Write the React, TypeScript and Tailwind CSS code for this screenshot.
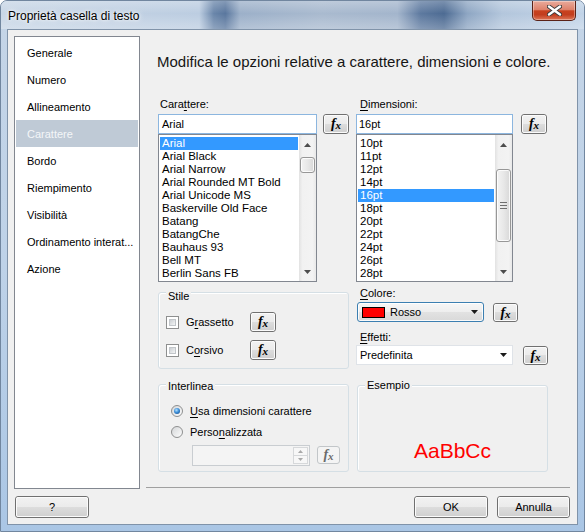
import React from "react";

const navItems = [
  "Generale",
  "Numero",
  "Allineamento",
  "Carattere",
  "Bordo",
  "Riempimento",
  "Visibilità",
  "Ordinamento interat...",
  "Azione",
];

const fontItems = [
  "Arial",
  "Arial Black",
  "Arial Narrow",
  "Arial Rounded MT Bold",
  "Arial Unicode MS",
  "Baskerville Old Face",
  "Batang",
  "BatangChe",
  "Bauhaus 93",
  "Bell MT",
  "Berlin Sans FB",
];

const sizeItems = ["10pt", "11pt", "12pt", "14pt", "16pt", "18pt", "20pt", "22pt", "24pt", "26pt", "28pt"];

function FxButton({ className = "", disabled = false }: { className?: string; disabled?: boolean }) {
  return (
    <div
      className={`${className} shrink-0 rounded-[3px] border ${
        disabled
          ? "border-[#c2c6c9] bg-[#f4f4f4]"
          : "border-[#707070] bg-[linear-gradient(to_bottom,#f2f2f2_0%,#ebebeb_50%,#dddddd_50%,#cfcfcf_100%)]"
      }`}
    >
      <div
        className={`w-full h-full rounded-[2px] border ${
          disabled ? "border-transparent" : "border-[#fbfbfb]"
        } flex items-center justify-center`}
      >
        <span
          className={`font-['Liberation_Serif',serif] italic font-bold text-[14px] leading-none ${
            disabled ? "text-[#6b6b6b]" : "text-black"
          }`}
        >
          f<span className="text-[11px] align-[-1px]">x</span>
        </span>
      </div>
    </div>
  );
}

function Button({ className = "", children }: { className?: string; children: React.ReactNode }) {
  return (
    <div
      className={`${className} h-[22px] rounded-[3px] border border-[#707070] bg-[linear-gradient(to_bottom,#f2f2f2_0%,#ebebeb_50%,#dddddd_50%,#cfcfcf_100%)]`}
    >
      <div className="w-full h-full rounded-[2px] border border-[#fbfbfb] flex items-center justify-center text-[11px]">
        {children}
      </div>
    </div>
  );
}

function ArrowUp() {
  return (
    <svg width="7" height="4" viewBox="0 0 7 4">
      <polygon points="3.5,0 7,4 0,4" fill="#4d4d4d" />
    </svg>
  );
}

function ArrowDown({ color = "#4d4d4d" }: { color?: string }) {
  return (
    <svg width="7" height="4" viewBox="0 0 7 4">
      <polygon points="0,0 7,0 3.5,4" fill={color} />
    </svg>
  );
}

function ScrollBar({ thumbClass, grip = false }: { thumbClass: string; grip?: boolean }) {
  return (
    <div className="w-[17px] h-full shrink-0 flex flex-col bg-[linear-gradient(to_right,#e2e2e2_0%,#f1f1f1_20%,#f3f3f3_80%,#e9e9e9_100%)]">
      <div className="h-[17px] flex items-center justify-center pt-[2px]">
        <ArrowUp />
      </div>
      <div className="flex-1 flex flex-col">
        <div
          className={`${thumbClass} mx-[1px] rounded-[3px] border border-[#979797] bg-[linear-gradient(to_right,#f3f3f3,#e8e8e8_50%,#d8d8d8)] shadow-[inset_0_0_0_1px_rgba(255,255,255,0.8)] flex flex-col items-center justify-center gap-[2px]`}
        >
          {grip && (
            <>
              <div className="w-[7px] h-px bg-[#6e6e6e]" />
              <div className="w-[7px] h-px bg-[#6e6e6e]" />
              <div className="w-[7px] h-px bg-[#6e6e6e]" />
            </>
          )}
        </div>
      </div>
      <div className="h-[17px] flex items-center justify-center pb-[1px]">
        <ArrowDown />
      </div>
    </div>
  );
}

function ListBox({
  items,
  selected,
  className,
  thumbClass,
  grip = false,
}: {
  items: string[];
  selected: number;
  className: string;
  thumbClass: string;
  grip?: boolean;
}) {
  return (
    <div className={`${className} h-[148px] border border-[#828790] bg-white flex`}>
      <div className="flex-1 min-w-0 pt-[2px] px-[1px]">
        {items.map((it, i) => (
          <div
            key={it}
            className={`h-[13px] leading-[13px] pl-[2px] text-[11.5px] whitespace-nowrap overflow-hidden ${
              i === selected ? "bg-[#3399ff] text-white" : "text-black"
            }`}
          >
            {it}
          </div>
        ))}
      </div>
      <ScrollBar thumbClass={thumbClass} grip={grip} />
    </div>
  );
}

function Group({
  className,
  legend,
  legendClass,
  children,
}: {
  className: string;
  legend: string;
  legendClass: string;
  children?: React.ReactNode;
}) {
  return (
    <div
      className={`${className} relative rounded-[3px] border border-[#d5dfe5] shadow-[inset_1px_1px_0_#ffffff]`}
    >
      <span className={`${legendClass} absolute left-[7px] px-[2px] bg-[#f0f0f0] leading-[14px] text-[11px]`}>
        {legend}
      </span>
      {children}
    </div>
  );
}

function CheckBox() {
  return (
    <div className="w-[13px] h-[13px] shrink-0 border border-[#8e8f8f] bg-white p-[2px]">
      <div className="w-full h-full border border-[#c2c6ca] bg-[linear-gradient(135deg,#cbcfd3,#f4f5f6)]" />
    </div>
  );
}

function Radio({ checked = false }: { checked?: boolean }) {
  return (
    <div className="w-[12px] h-[12px] shrink-0 rounded-full border border-[#8e8f8f] bg-[linear-gradient(135deg,#d4d6d8,#fdfdfd)] flex items-center justify-center">
      {checked && (
        <div className="w-[6px] h-[6px] rounded-full bg-[radial-gradient(circle_at_40%_35%,#b5e2ff_0%,#3d8fd8_45%,#0e3f7c_100%)]" />
      )}
    </div>
  );
}

function Nav() {
  return (
    <div className="w-[126px] h-full shrink-0 border border-[#828790] bg-white pt-[2px] flex flex-col">
      {navItems.map((n) => (
        <div
          key={n}
          className={`h-[27px] mx-[1px] pl-[11px] flex items-center text-[11px] whitespace-nowrap ${
            n === "Carattere" ? "bg-[#bfcad6] text-[#f4f6f8]" : "text-black"
          }`}
        >
          {n}
        </div>
      ))}
    </div>
  );
}

function Content() {
  return (
    <div className="ml-[6px] w-[424px] h-full flex flex-col">
      <div className="mt-[17px] pl-[11px] text-[15px] leading-[18px] text-[#151515] whitespace-nowrap">
        Modifica le opzioni relative a carattere, dimensioni e colore.
      </div>

      <div className="mt-[26px] pl-[12px] flex">
        {/* left column */}
        <div className="w-[191px] flex flex-col">
          <div className="h-[14px] leading-[14px] pl-[2px]">
            Cara<span className="underline underline-offset-[2px]">t</span>tere:
          </div>
          <div className="mt-[3px] flex">
            <div className="w-[159px] h-[20px] border border-[#8cb6df] bg-white pl-[3px] flex items-center">
              Arial
            </div>
            <FxButton className="ml-[6px] w-[26px] h-[20px]" />
          </div>
          <ListBox items={fontItems} selected={0} className="w-[159px]" thumbClass="mt-[5px] h-[16px]" />

          <Group className="mt-[10px] h-[77px]" legend="Stile" legendClass="-top-[4px]">
            <div className="mt-[19px] h-[20px] flex items-center">
              <div className="ml-[7px]">
                <CheckBox />
              </div>
              <span className="ml-[7px] w-[64px]">
                G<span className="underline underline-offset-[2px]">r</span>assetto
              </span>
              <FxButton className="w-[26px] h-[20px]" />
            </div>
            <div className="mt-[8px] h-[20px] flex items-center">
              <div className="ml-[7px]">
                <CheckBox />
              </div>
              <span className="ml-[7px] w-[64px]">
                C<span className="underline underline-offset-[2px]">o</span>rsivo
              </span>
              <FxButton className="w-[26px] h-[20px]" />
            </div>
          </Group>

          <Group className="mt-[15px] h-[88px]" legend="Interlinea" legendClass="-top-[6px]">
            <div className="mt-[18px] h-[16px] flex items-center">
              <div className="ml-[12px]">
                <Radio checked />
              </div>
              <span className="ml-[7px]">
                <span className="underline underline-offset-[2px]">U</span>sa dimensioni carattere
              </span>
            </div>
            <div className="mt-[5px] h-[16px] flex items-center">
              <div className="ml-[12px]">
                <Radio />
              </div>
              <span className="ml-[7px]">
                Perso<span className="underline underline-offset-[2px]">n</span>alizzata
              </span>
            </div>
            <div className="mt-[5px] flex items-start">
              <div className="ml-[33px] w-[118px] h-[21px] border border-[#c9cdd1] bg-[#f4f4f4] flex justify-end p-[1px]">
                <div className="w-[15px] h-full flex flex-col">
                  <div className="flex-1 border border-[#d6d8da] bg-[#f7f7f7] flex items-center justify-center">
                    <svg width="5" height="3" viewBox="0 0 5 3">
                      <polygon points="2.5,0 5,3 0,3" fill="#a8a8a8" />
                    </svg>
                  </div>
                  <div className="flex-1 border border-[#d6d8da] border-t-0 bg-[#f7f7f7] flex items-center justify-center">
                    <svg width="5" height="3" viewBox="0 0 5 3">
                      <polygon points="0,0 5,0 2.5,3" fill="#a8a8a8" />
                    </svg>
                  </div>
                </div>
              </div>
              <FxButton disabled className="ml-[7px] mt-[1px] w-[23px] h-[18px]" />
            </div>
          </Group>
        </div>

        {/* right column */}
        <div className="ml-[7px] w-[192px] flex flex-col">
          <div className="h-[14px] leading-[14px] pl-[4px]">
            <span className="underline underline-offset-[2px]">D</span>imensioni:
          </div>
          <div className="mt-[3px] flex">
            <div className="w-[157px] h-[20px] border border-[#8cb6df] bg-white pl-[2px] flex items-center">
              16pt
            </div>
            <FxButton className="ml-[8px] w-[26px] h-[20px]" />
          </div>
          <ListBox
            items={sizeItems}
            selected={4}
            className="w-[157px]"
            thumbClass="mt-[17px] h-[73px]"
            grip
          />

          <div className="mt-[4px] h-[14px] leading-[14px] pl-[4px]">
            <span className="underline underline-offset-[2px]">C</span>olore:
          </div>
          <div className="mt-[2px] flex items-start">
            <div className="ml-[1px] w-[127px] h-[20px] rounded-[3px] border border-[#3c7fb1] bg-[linear-gradient(to_bottom,#f6f6f6_0%,#eeeeee_50%,#e2e2e2_51%,#d9d9d9_100%)] shadow-[inset_0_0_0_1px_rgba(255,255,255,0.85)] flex items-center">
              <div className="ml-[4px] w-[23px] h-[11px] border border-black bg-[#ff0000]" />
              <span className="ml-[5px]">Rosso</span>
              <div className="ml-auto mr-[5px] flex items-center">
                <ArrowDown color="#1a1a1a" />
              </div>
            </div>
            <FxButton className="ml-[9px] mt-[1px] w-[25px] h-[19px]" />
          </div>

          <div className="mt-[8px] h-[14px] leading-[14px] pl-[4px]">
            <span className="underline underline-offset-[2px]">E</span>ffetti:
          </div>
          <div className="mt-[1px] flex items-start">
            <div className="w-[157px] h-[20px] border border-[#dfe3e8] bg-white flex items-center pl-[3px]">
              <span>Predefinita</span>
              <div className="ml-auto mr-[5px] flex items-center">
                <ArrowDown color="#1a1a1a" />
              </div>
            </div>
            <FxButton className="ml-[10px] mt-[1px] w-[25px] h-[19px]" />
          </div>

          <Group className="mt-[20px] ml-[1px] w-[191px] h-[87px]" legend="Esempio" legendClass="-top-[8px]">
            <div className="w-full h-full flex items-end justify-center pb-[8px]">
              <span className="text-[21px] leading-[24px] text-[#ff0000] font-['Liberation_Sans',Arial,sans-serif]">
                AaBbCc
              </span>
            </div>
          </Group>
        </div>
      </div>

      <div className="mt-auto mb-[1px] h-px bg-[#a0a0a0]" />
    </div>
  );
}

function TitleBar() {
  return (
    <div className="h-[28px] shrink-0 flex items-start bg-[linear-gradient(to_bottom,rgba(255,255,255,0.25),rgba(255,255,255,0)_45%,rgba(255,255,255,0.25)),linear-gradient(90deg,#c8d6e6_0%,#bccde1_34%,#6a86aa_36.5%,#5a779e_38.5%,#9cb0c9_41%,#a9bacf_55%,#a3b5cc_68%,#5d799f_72%,#4d6b93_76%,#8ea6c3_80%,#b3c6dc_86%,#c2d4e8_100%)]">
      <span className="ml-[7px] mt-[7px] text-[12px] leading-[16px] text-black [text-shadow:0_0_6px_#ffffff,0_0_3px_#ffffff]">
        Proprietà casella di testo
      </span>
      <div className="ml-auto mr-[8px] w-[44px] h-[20px] rounded-b-[5px] border border-t-0 border-[#5a2217] bg-[linear-gradient(to_bottom,#e9ab9c_0%,#de826c_45%,#c8421f_52%,#c23d1e_72%,#de7657_100%)] shadow-[inset_0_0_0_1px_rgba(255,255,255,0.35)] flex items-center justify-center">
        <svg width="15" height="11" viewBox="0 0 15 11">
          <path d="M2 1.5 L13 9.5 M13 1.5 L2 9.5" stroke="#3a3a3a" strokeWidth="4.2" strokeLinecap="round" />
          <path d="M2 1.5 L13 9.5 M13 1.5 L2 9.5" stroke="#ffffff" strokeWidth="2.4" strokeLinecap="round" />
        </svg>
      </div>
    </div>
  );
}

export default function App() {
  return (
    <div className="w-[585px] h-[532px] font-['Liberation_Sans',Arial,sans-serif] text-[11px] leading-[14px] text-black select-none">
      <div className="w-full h-full flex flex-col rounded-t-[7px] border border-[#71869f] overflow-hidden bg-[linear-gradient(to_bottom,#c5d5e7_0%,#bed2e8_50%,#aac6e5_100%)]">
        <TitleBar />
        <div className="mx-[6px] mb-[6px] flex-1 min-h-0 border border-[#8093a9] bg-[#f0f0f0] flex flex-col pt-[6px] pl-[6px] pr-[7px] pb-[6px]">
          <div className="h-[453px] shrink-0 flex">
            <Nav />
            <Content />
          </div>
          <div className="mt-[7px] h-[22px] flex">
            <Button className="ml-[1px] w-[74px]">?</Button>
            <Button className="ml-auto w-[74px]">OK</Button>
            <Button className="ml-[9px] w-[73px]">Annulla</Button>
          </div>
        </div>
      </div>
    </div>
  );
}
